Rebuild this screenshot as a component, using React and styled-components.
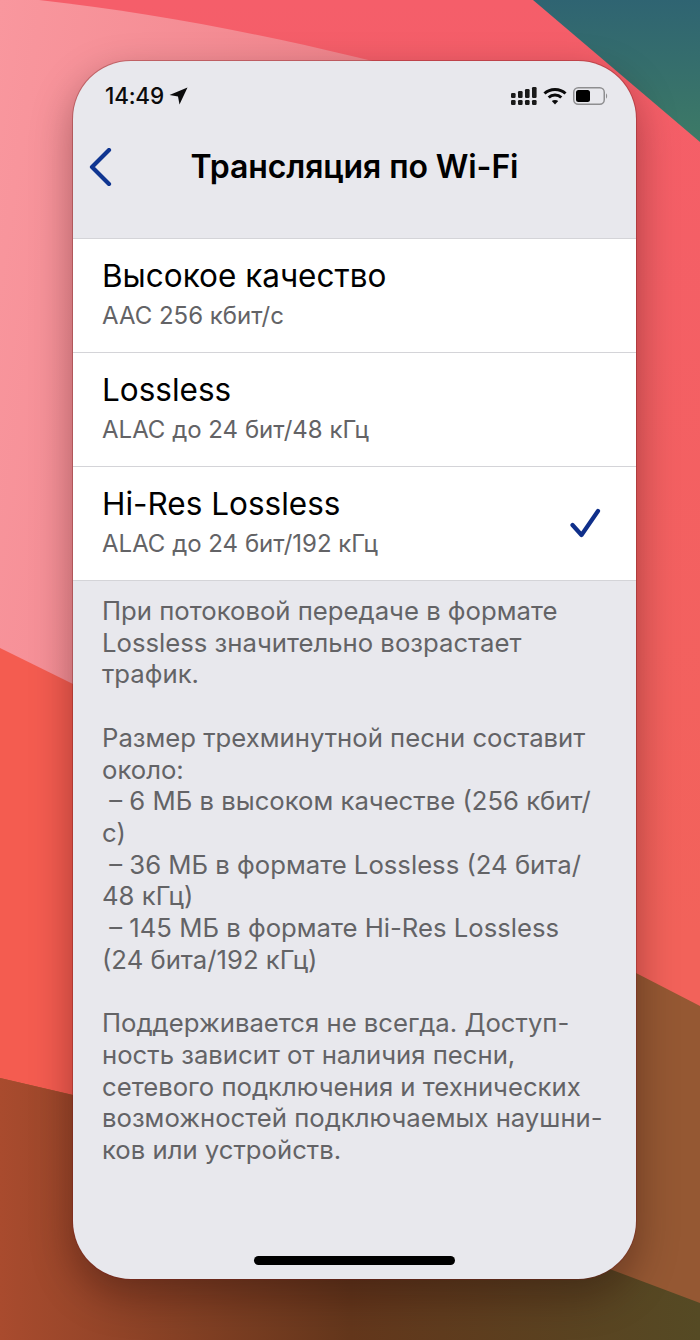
import React from 'react';
import styled, { createGlobalStyle } from 'styled-components';

const GlobalStyle = createGlobalStyle`
    html, body {
        margin: 0;
        padding: 0;
    }
    body {
        font-family: "Inter", "Liberation Sans", sans-serif;
    }
`;

const Page = styled.div`
    position: relative;
    width: 700px;
    height: 1340px;
    overflow: hidden;
    box-sizing: border-box;
    padding: 61px 64px 61px 73px;
    background: #f45c66;
`;

const Wallpaper = styled.svg`
    position: absolute;
    top: 0;
    left: 0;
`;

const Phone = styled.div`
    position: relative;
    height: 1218px;
    border-radius: 58px;
    background: #e8e8ed;
    box-shadow: 0 0 0 1px rgba(120, 30, 30, 0.35), 0 16px 40px rgba(30, 5, 5, 0.36);
    display: flex;
    flex-direction: column;
    overflow: hidden;
`;

const StatusBar = styled.div`
    height: 70px;
    box-sizing: border-box;
    padding: 22px 28px 0 32px;
    display: flex;
    justify-content: space-between;
    align-items: flex-start;
`;

const Time = styled.div`
    display: flex;
    align-items: center;
    gap: 5px;
    font-size: 22.5px;
    line-height: 26px;
    font-weight: 500;
    letter-spacing: -0.2px;
    color: #0b0b0c;
`;

const StatusIcons = styled.div`
    display: flex;
    align-items: center;
    gap: 6px;
    height: 26px;
`;

const NavBar = styled.div`
    position: relative;
    height: 107px;
    display: flex;
    justify-content: center;
    padding-top: 16px;
    box-sizing: border-box;
`;

const BackButton = styled.svg`
    position: absolute;
    left: 15px;
    top: 17px;
`;

const Title = styled.h1`
    margin: 0;
    font-size: 32px;
    line-height: 40px;
    font-weight: 600;
    letter-spacing: -0.1px;
    color: #000;
`;

const List = styled.div`
    background: #fff;
    border-top: 1px solid #d4d4d8;
    border-bottom: 1px solid #d4d4d8;
`;

const Row = styled.div`
    height: 113px;
    padding-left: 29px;
    padding-right: 34px;
    display: flex;
    align-items: center;
    justify-content: space-between;
    & + & {
        border-top: 1px solid #d4d4d8;
    }
`;

const RowText = styled.div`
    display: flex;
    flex-direction: column;
    margin-top: 3px;
`;

const RowTitle = styled.div`
    font-size: 31.5px;
    line-height: 38px;
    color: #000;
`;

const RowSub = styled.div`
    font-size: 24px;
    line-height: 42px;
    color: #636366;
`;

const Footer = styled.div`
    padding: 14px 29px 0;
    font-size: 25.7px;
    line-height: 31.7px;
    color: #636366;
    white-space: pre;
`;

const Paragraph = styled.p`
    margin: 0 0 31.7px;
`;

const HomeBar = styled.div`
    position: absolute;
    left: 181px;
    bottom: 14px;
    width: 201px;
    height: 9px;
    border-radius: 5px;
    background: #000;
`;

const Wall = () => (
    <Wallpaper width="700" height="1340" viewBox="0 0 700 1340">
        <defs>
            <linearGradient id="base" x1="0" y1="0" x2="0" y2="1">
                <stop offset="0" stopColor="#f55e6a" />
                <stop offset="0.7" stopColor="#f2625a" />
            </linearGradient>
            <linearGradient id="teal" x1="0" y1="0" x2="0" y2="1">
                <stop offset="0" stopColor="#2f6472" />
                <stop offset="1" stopColor="#3d7a66" />
            </linearGradient>
            <linearGradient id="pink" x1="0" y1="0" x2="1" y2="0.3">
                <stop offset="0" stopColor="#f9979e" />
                <stop offset="1" stopColor="#ee7f87" />
            </linearGradient>
            <linearGradient id="brown" x1="0" y1="0" x2="1" y2="0">
                <stop offset="0" stopColor="#a94b2e" />
                <stop offset="0.5" stopColor="#64371c" />
                <stop offset="1" stopColor="#554a24" />
            </linearGradient>
        </defs>
        <rect width="700" height="1340" fill="url(#base)" />
        <path d="M533 0 L700 142 L700 0 Z" fill="url(#teal)" />
        <path d="M0 -4 C150 10 300 40 460 84 L460 900 L0 900 Z" fill="url(#pink)" />
        <path d="M0 648 L73 684 L460 900 L0 900 Z" fill="#f45c50" />
        <path d="M0 880 L460 880 L460 1340 L0 1340 Z" fill="#f45c50" />
        <path d="M636 973 L700 1006 L700 1340 L0 1340 L0 1078 L73 1095 Z" fill="#955833" />
        <path d="M0 1078 L73 1095 L607 1268 L700 1303 L700 1340 L0 1340 Z" fill="url(#brown)" />
    </Wallpaper>
);

const LocationIcon = () => (
    <svg width="19" height="18" viewBox="0 0 19 18">
        <path d="M18.5 0.5 L10.5 17.5 L9 9.5 L0.5 8 Z" fill="#0b0b0c" />
    </svg>
);

const SignalIcon = () => (
    <svg width="26" height="18" viewBox="0 0 26 18" fill="#1a1a1a">
        <rect x="0" y="6" width="4.6" height="5" rx="1.2" />
        <rect x="0" y="13" width="4.6" height="5" rx="1.2" />
        <rect x="7" y="4" width="4.6" height="7" rx="1.2" />
        <rect x="7" y="13" width="4.6" height="5" rx="1.2" />
        <rect x="14" y="2" width="4.6" height="9" rx="1.2" />
        <rect x="14" y="13" width="4.6" height="5" rx="1.2" />
        <rect x="21" y="0" width="4.6" height="11" rx="1.2" />
        <rect x="21" y="13" width="4.6" height="5" rx="1.2" />
    </svg>
);

const WifiIcon = () => (
    <svg width="24" height="18" viewBox="0 0 24 18" fill="none" stroke="#0b0b0c" strokeWidth="3">
        <path d="M1.5 6.5 C7 1 17 1 22.5 6.5" />
        <path d="M5.7 10.5 C9 7.3 15 7.3 18.3 10.5" />
        <path d="M12 17.5 L8.8 14 C10.5 12.6 13.5 12.6 15.2 14 Z" fill="#0b0b0c" stroke="none" />
    </svg>
);

const BatteryIcon = () => (
    <svg width="35" height="18" viewBox="0 0 35 18">
        <rect x="0.75" y="0.75" width="30.5" height="16.5" rx="4.5" fill="none" stroke="#8e8e90" strokeWidth="1.5" />
        <rect x="3" y="3" width="14" height="12" rx="2.5" fill="#000" />
        <path d="M33 6.5 C34.5 7 34.5 11 33 11.5 Z" fill="#8e8e90" />
    </svg>
);

const rows = [
    { title: 'Высокое качество', sub: 'AAC 256 кбит/с' },
    { title: 'Lossless', sub: 'ALAC до 24 бит/48 кГц' },
    { title: 'Hi-Res Lossless', sub: 'ALAC до 24 бит/192 кГц', checked: true },
];

export default function App() {
    return (
        <Page>
            <GlobalStyle />
            <Wall />
            <Phone>
                <StatusBar>
                    <Time>14:49 <LocationIcon /></Time>
                    <StatusIcons>
                        <SignalIcon />
                        <WifiIcon />
                        <BatteryIcon />
                    </StatusIcons>
                </StatusBar>
                <NavBar>
                    <BackButton width="26" height="38" viewBox="0 0 26 38">
                        <path d="M21 2 L4 19 L21 36" fill="none" stroke="#0f3591" strokeWidth="4.2" strokeLinecap="round" strokeLinejoin="round" />
                    </BackButton>
                    <Title>Трансляция по Wi-Fi</Title>
                </NavBar>
                <List>
                    {rows.map((r) => (
                        <Row key={r.title}>
                            <RowText>
                                <RowTitle>{r.title}</RowTitle>
                                <RowSub>{r.sub}</RowSub>
                            </RowText>
                            {r.checked && (
                                <svg width="32" height="32" viewBox="0 0 32 32">
                                    <path d="M2.5 17 L11.5 27 L28 3" fill="none" stroke="#0f2f8a" strokeWidth="4.2" strokeLinecap="round" strokeLinejoin="round" />
                                </svg>
                            )}
                        </Row>
                    ))}
                </List>
                <Footer>
                    <Paragraph>{'При потоковой передаче в формате\nLossless значительно возрастает\nтрафик.'}</Paragraph>
                    <Paragraph>{'Размер трехминутной песни составит\nоколо:\n – 6 МБ в высоком качестве (256 кбит/\nс)\n – 36 МБ в формате Lossless (24 бита/\n48 кГц)\n – 145 МБ в формате Hi-Res Lossless\n(24 бита/192 кГц)'}</Paragraph>
                    <Paragraph>{'Поддерживается не всегда. Доступ-\nность зависит от наличия песни,\nсетевого подключения и технических\nвозможностей подключаемых наушни-\nков или устройств.'}</Paragraph>
                </Footer>
                <HomeBar />
            </Phone>
        </Page>
    );
}
